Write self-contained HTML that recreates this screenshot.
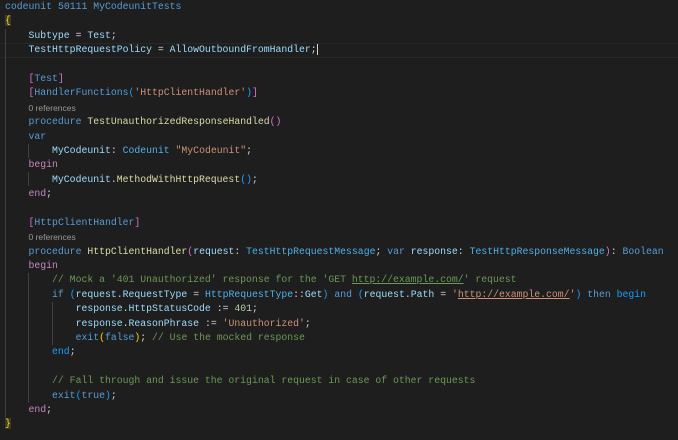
<!DOCTYPE html>
<html><head><style>
body{margin:0;background:#1e1e1e;width:678px;height:440px;overflow:hidden;position:relative}
.c{position:absolute;left:5px;top:0;font-family:"Liberation Mono",monospace;font-size:9.8px;color:#d4d4d4}
.l{height:14.4px;line-height:14.4px;white-space:pre}
.r{font-family:"Liberation Sans",sans-serif;font-size:8.5px;color:#999;padding-left:23.5px}
.k{color:#569cd6}.p{color:#c586c0}.v{color:#9cdcfe}.t{color:#4fb0e8}.f{color:#dcdcaa}.s{color:#ce9178}.m{color:#6a9955}.n{color:#b5cea8}.y{color:#ffd700}.o{color:#da70d6}.b{color:#179fff}
.g{position:absolute;width:1px;background:#404040}
.hl{position:absolute;left:0;top:43px;width:678px;height:13px;border-top:1px solid #282828;border-bottom:1px solid #282828}
u{text-decoration:underline}
</style></head><body>
<div class="hl"></div>
<div class="g" style="left:5px;top:29px;height:388px"></div>
<div class="g" style="left:28px;top:144px;height:14px"></div>
<div class="g" style="left:28px;top:172px;height:14px"></div>
<div class="g" style="left:28px;top:273px;height:130px"></div>
<div class="g" style="left:52px;top:302px;height:43px"></div>
<div class="c"><div class="l"><span class="k">codeunit</span> <span class="k">50111</span> <span class="k">MyCodeunitTests</span></div><div class="l"><span class="y" style="background:#3a3a2a">{</span></div><div class="l">    <span class="v">Subtype</span> = <span class="v">Test</span>;</div><div class="l">    <span class="v">TestHttpRequestPolicy</span> = <span class="v">AllowOutboundFromHandler</span>;<span style="border-left:1px solid #d4d4d4"></span></div><div class="l"> </div><div class="l">    <span class="o">[</span><span class="k">Test</span><span class="o">]</span></div><div class="l">    <span class="o">[</span><span class="k">HandlerFunctions</span><span class="b">(</span><span class="s">'HttpClientHandler'</span><span class="b">)</span><span class="o">]</span></div><div class="l r">0 references</div><div class="l">    <span class="k">procedure</span> <span class="f">TestUnauthorizedResponseHandled</span><span class="o">()</span></div><div class="l">    <span class="k">var</span></div><div class="l">        <span class="v">MyCodeunit</span>: <span class="t">Codeunit</span> <span class="s">"MyCodeunit"</span>;</div><div class="l">    <span class="p">begin</span></div><div class="l">        <span class="v">MyCodeunit</span>.<span class="f">MethodWithHttpRequest</span><span class="b">()</span>;</div><div class="l">    <span class="p">end</span>;</div><div class="l"> </div><div class="l">    <span class="o">[</span><span class="k">HttpClientHandler</span><span class="o">]</span></div><div class="l r">0 references</div><div class="l">    <span class="k">procedure</span> <span class="f">HttpClientHandler</span><span class="o">(</span><span class="v">request</span>: <span class="t">TestHttpRequestMessage</span>; <span class="k">var</span> <span class="v">response</span>: <span class="t">TestHttpResponseMessage</span><span class="o">)</span>: <span class="k">Boolean</span></div><div class="l">    <span class="p">begin</span></div><div class="l">        <span class="m">// Mock a '401 Unauthorized' response for the 'GET <u>http://example.com/</u>' request</span></div><div class="l">        <span class="k">if</span> <span class="b">(</span><span class="v">request</span>.<span class="v">RequestType</span> = <span class="t">HttpRequestType</span>::<span class="v">Get</span><span class="b">)</span> <span class="k">and</span> <span class="b">(</span><span class="v">request</span>.<span class="v">Path</span> = <span class="s">'<u>http://example.com/</u>'</span><span class="b">)</span> <span class="k">then</span> <span class="b">begin</span></div><div class="l">            <span class="v">response</span>.<span class="v">HttpStatusCode</span> := <span class="n">401</span>;</div><div class="l">            <span class="v">response</span>.<span class="v">ReasonPhrase</span> := <span class="s">'Unauthorized'</span>;</div><div class="l">            <span class="k">exit</span><span class="y">(</span><span class="k">false</span><span class="y">)</span>; <span class="m">// Use the mocked response</span></div><div class="l">        <span class="b">end</span>;</div><div class="l"> </div><div class="l">        <span class="m">// Fall through and issue the original request in case of other requests</span></div><div class="l">        <span class="k">exit</span><span class="b">(</span><span class="k">true</span><span class="b">)</span>;</div><div class="l">    <span class="p">end</span>;</div><div class="l"><span class="y" style="background:#3a3a2a">}</span></div></div>
</body></html>
